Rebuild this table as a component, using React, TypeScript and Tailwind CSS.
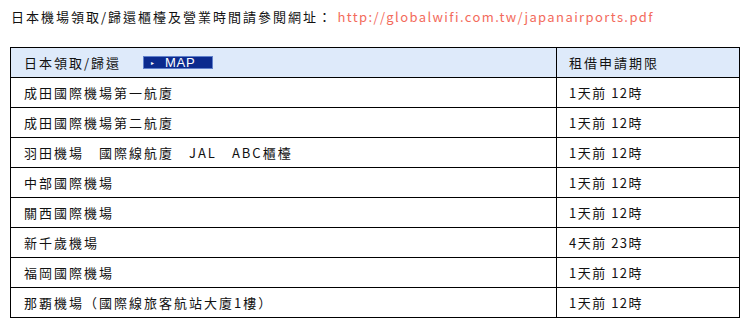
import React from "react";

const rows: [string, string][] = [
    ["成田國際機場第一航廈", "1天前 12時"],
    ["成田國際機場第二航廈", "1天前 12時"],
    ["羽田機場　國際線航廈　JAL　ABC櫃檯", "1天前 12時"],
    ["中部國際機場", "1天前 12時"],
    ["關西國際機場", "1天前 12時"],
    ["新千歲機場", "4天前 23時"],
    ["福岡國際機場", "1天前 12時"],
    ["那覇機場（國際線旅客航站大廈1樓）", "1天前 12時"],
];

export default function App() {
    return (
        <div className="w-[753px] h-[329px] bg-white text-[13px] text-[#111] font-['Noto_Sans_CJK_TC','Noto_Sans',sans-serif]">
            <div className="pl-[11px] pt-[8px] h-[47px] tracking-[2px] leading-[18px]">
                日本機場領取/歸還櫃檯及營業時間請參閱網址：
                <span className="text-[#f36b5c] tracking-[1.4px]"> http://globalwifi.com.tw/japanairports.pdf</span>
            </div>
            <table className="ml-[10px] w-[730px] border-collapse border border-black">
                <thead>
                    <tr className="bg-[#deeafa] h-[30px]">
                        <th className="border border-black text-left font-normal pl-[13px] w-[546px] tracking-[2px]">
                            <div className="flex items-center">
                                <span>日本領取/歸還</span>
                                <span className="ml-[22px] w-[70px] h-[13px] bg-[#0b2a8e] border border-[#6080cc] flex items-center text-white text-[13px] leading-none tracking-[0.8px] font-['Liberation_Sans',sans-serif]">
                                    <span className="ml-[7px] mr-[10px] text-[6px]">▸</span>
                                    MAP
                                </span>
                            </div>
                        </th>
                        <th className="border border-black text-left font-normal pl-[12px] tracking-[2px]">租借申請期限</th>
                    </tr>
                </thead>
                <tbody>
                    {rows.map(([name, limit], i) => (
                        <tr key={i} className="h-[30px]">
                            <td className="border border-black pl-[13px] tracking-[2px]">{name}</td>
                            <td className="border border-black pl-[12px] tracking-[1.5px]">{limit}</td>
                        </tr>
                    ))}
                </tbody>
            </table>
        </div>
    );
}
